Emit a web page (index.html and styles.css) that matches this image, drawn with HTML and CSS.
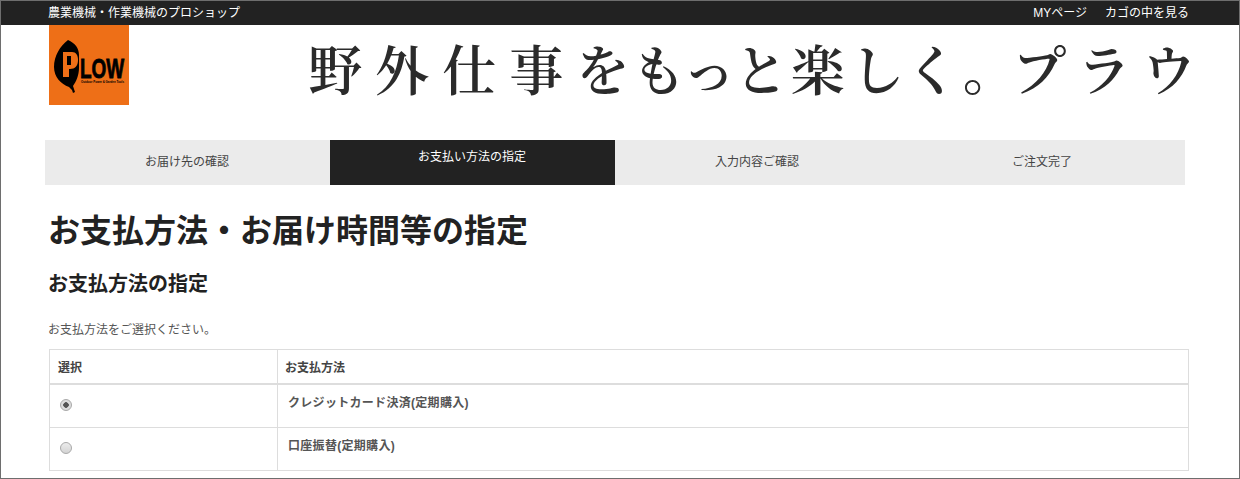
FILE: index.html
```html
<!DOCTYPE html>
<html lang="ja">
<head>
    <meta charset="UTF-8">
    <title>お支払方法・お届け時間等の指定</title>
    <link rel="stylesheet" href="styles.css">
</head>
<body>
<div class="frame">
    <div class="topbar">
        <div class="topbar-inner">
            <span>農業機械・作業機械のプロショップ</span>
            <nav class="topnav">
                <a href="#">MYページ</a>
                <a href="#">カゴの中を見る</a>
            </nav>
        </div>
    </div>

    <header class="header">
        <svg class="logo" width="80" height="80" viewBox="0 0 80 80" role="img" aria-label="PLOW">
            <rect width="80" height="80" fill="#ee6f17"/>
            <path d="M19 15 C11 21 5 31 5 42 C5 52 12 59 20 62 L23 65 L24 68 L26 67 L24 61 C27 57 30 50 30 43 L30 30 C30 23 26 18 19 15Z" fill="#000"/>
            <path d="M14 27 L23 27 C27 27 29 30 29 35 C29 41 26 44 21 44 L20 44 L20 52 L14 52Z" fill="#ee6f17"/>
            <rect x="18" y="31" width="4" height="9" fill="#000"/>
            <text class="logo-word" transform="translate(31 53) scale(0.95 1.4)">LOW</text>
            <text class="logo-small" x="32" y="58" textLength="43" lengthAdjust="spacingAndGlyphs">Outdoor Power &amp; Garden Tools</text>
        </svg>
        <p class="catch"><span class="kanji">野外仕事</span><span class="kana">をもっと</span><span class="kanji-tight">楽</span>しく<span class="maru">。</span><span class="kana-end">プラウ</span></p>
    </header>

    <ol class="steps">
        <li>お届け先の確認</li>
        <li class="current">お支払い方法の指定</li>
        <li>入力内容ご確認</li>
        <li>ご注文完了</li>
    </ol>

    <main class="content">
        <h1>お支払方法・お届け時間等の指定</h1>
        <h2>お支払方法の指定</h2>
        <p class="lead">お支払方法をご選択ください。</p>

        <table class="pay-table">
            <thead>
                <tr>
                    <th class="col-select">選択</th>
                    <th class="col-method">お支払方法</th>
                </tr>
            </thead>
            <tbody>
                <tr>
                    <td><input type="radio" name="payment" checked></td>
                    <td class="method">クレジットカード決済(定期購入)</td>
                </tr>
                <tr>
                    <td><input type="radio" name="payment"></td>
                    <td class="method">口座振替(定期購入)</td>
                </tr>
            </tbody>
        </table>
    </main>
</div>
</body>
</html>
```

FILE: styles.css
```css
html, body {
    margin: 0;
    padding: 0;
    height: 100%;
    overflow: hidden;
}
body {
    font-family: "Liberation Sans", "Noto Sans CJK JP", sans-serif;
    font-size: 12px;
    color: #444;
    background: #fff;
}
.frame {
    height: 479px;
    box-sizing: border-box;
    border: 1px solid #6e6e6e;
    overflow: hidden;
}
.topbar {
    background: #222;
    color: #fff;
    height: 24px;
    line-height: 24px;
}
.topbar-inner {
    display: flex;
    justify-content: space-between;
    padding: 0 50px 0 47px;
}
.topnav {
    display: flex;
    gap: 18px;
}
.topnav a {
    color: #fff;
    text-decoration: none;
}
.header {
    display: flex;
    justify-content: space-between;
    padding: 0 46px 0 48px;
    height: 115px;
}
.logo-word {
    font-family: "Liberation Sans", sans-serif;
    font-weight: bold;
    font-size: 20px;
    fill: #000;
    stroke: #000;
    stroke-width: 0.6px;
}
.logo-small {
    font-family: "Liberation Sans", sans-serif;
    font-weight: bold;
    font-size: 2.8px;
    fill: #000;
}
.catch {
    margin: 10px -16px 0 0;
    font-family: "Noto Serif CJK JP", "Liberation Serif", "Noto Sans CJK JP", serif;
    font-size: 54px;
    font-weight: 600;
    font-feature-settings: "palt";
    line-height: 66px;
    letter-spacing: 11px;
    color: #2b2b2b;
    white-space: nowrap;
}
.kanji {
    letter-spacing: 13px;
}
.kana {
    letter-spacing: 7px;
}
.kanji-tight {
    letter-spacing: 9px;
}
.maru {
    letter-spacing: 24px;
}
.kana-end {
    letter-spacing: 16px;
}
.steps {
    display: grid;
    grid-template-columns: repeat(4, 285px);
    margin: 0 0 0 44px;
    padding: 0;
    list-style: none;
    background: #ebebeb;
    width: 1140px;
}
.steps li {
    height: 45px;
    padding-right: 1px;
    line-height: 45px;
    text-align: center;
    color: #444;
}
.steps .current {
    background: #222;
    color: #fff;
    line-height: 35px;
}
.content {
    padding: 0 50px 0 47px;
}
h1 {
    margin: 26px 0 0;
    font-size: 32px;
    line-height: 40px;
    color: #222;
}
h2 {
    margin: 20px 0 0;
    font-size: 20px;
    line-height: 26px;
    color: #222;
}
.lead {
    margin: 23px 0 0;
    line-height: 20px;
    color: #555;
}
.pay-table {
    width: calc(100% - 1px);
    margin: 9px 0 0 1px;
    border-collapse: collapse;
}
.pay-table th,
.pay-table td {
    border: 1px solid #ddd;
    padding: 8px;
    text-align: left;
    font-weight: bold;
}
.pay-table th {
    height: 17px;
    border-bottom-width: 2px;
}
.col-select {
    width: 211px;
}
.pay-table .col-method {
    padding-left: 7px;
}
.pay-table td {
    height: 26px;
    padding-top: 7px;
    padding-bottom: 9px;
    vertical-align: middle;
}
.pay-table input {
    appearance: none;
    display: block;
    box-sizing: border-box;
    margin: 0 0 0 2px;
    width: 12px;
    height: 12px;
    border: 1px solid #aaa;
    border-radius: 50%;
    background: linear-gradient(#ececec, #d4d4d4);
}
.pay-table input:checked {
    background: radial-gradient(circle, #555 0 2.5px, #ddd 3px);
}
.pay-table .method {
    padding: 8px 10px 0;
    height: 34px;
    vertical-align: top;
    letter-spacing: 0.3px;
    color: #555;
}
```
